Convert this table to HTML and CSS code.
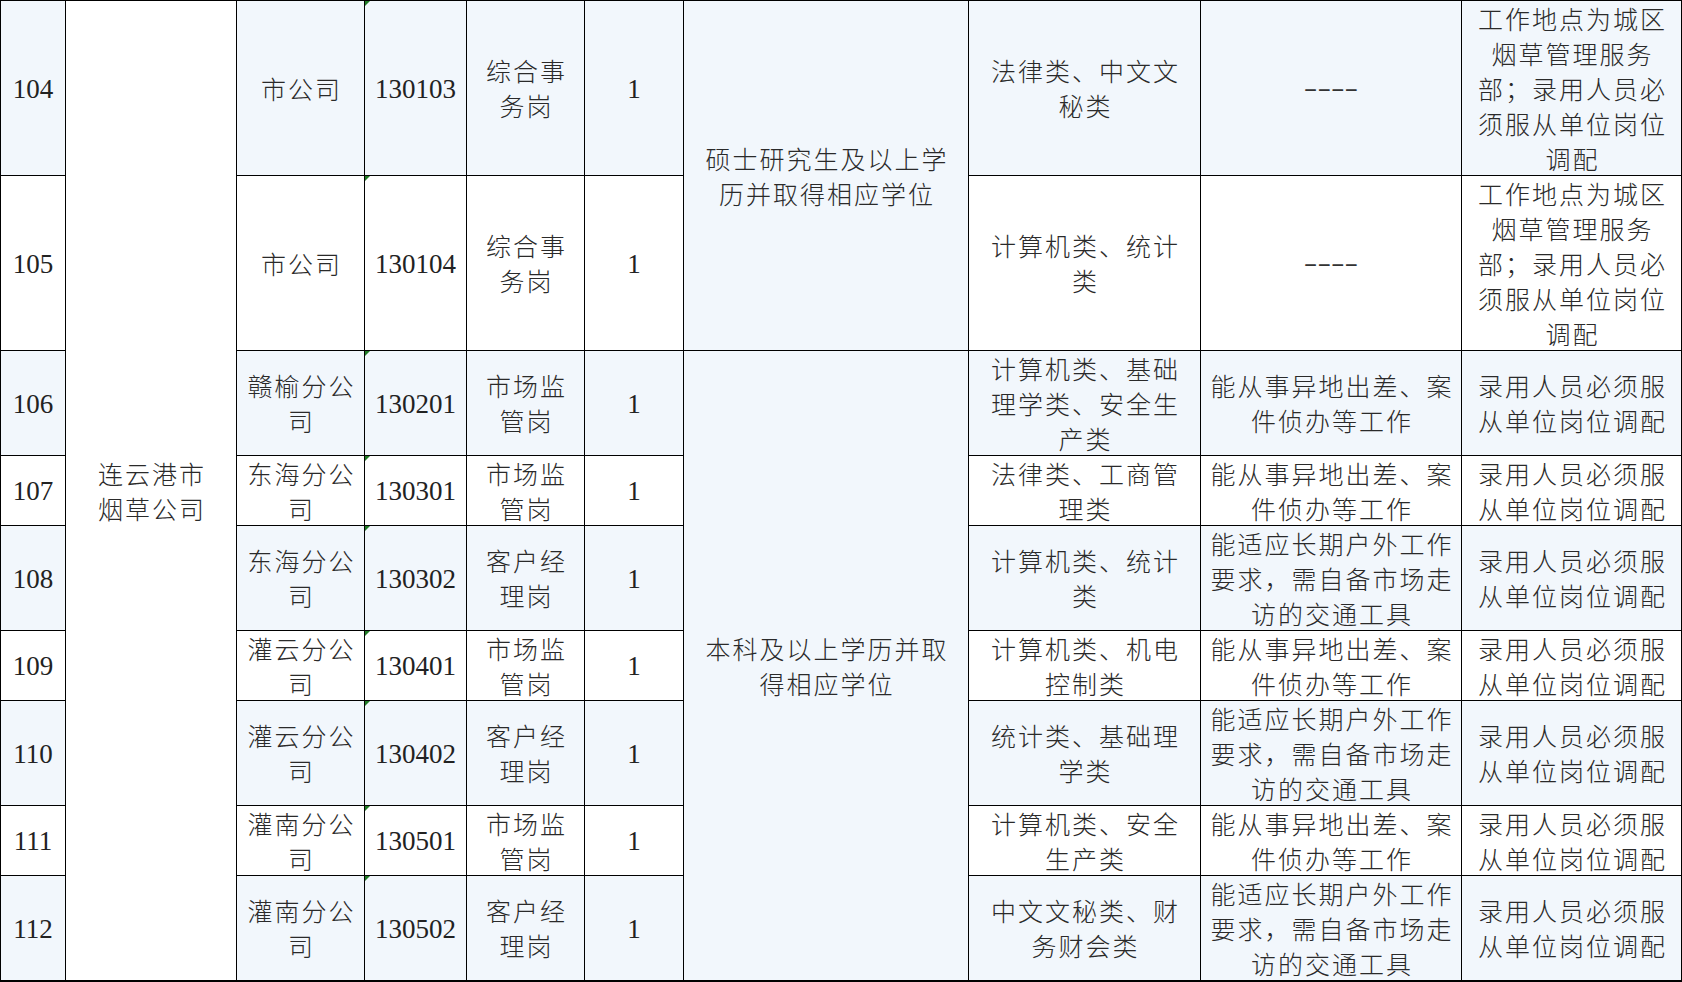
FILE: index.html
```html
<!DOCTYPE html>
<html lang="zh-CN">
<head>
<meta charset="utf-8">
<title>岗位表</title>
<link rel="stylesheet" href="styles.css">
</head>
<body>
<div class="sheet">
  <!-- 104 -->
  <div class="c num alt">104</div>
  <div class="c cn span9">连云港市<br>烟草公司</div>
  <div class="c cn alt">市公司</div>
  <div class="c num code alt">130103</div>
  <div class="c cn alt">综合事<br>务岗</div>
  <div class="c num alt">1</div>
  <div class="c cn span2 alt">硕士研究生及以上学<br>历并取得相应学位</div>
  <div class="c cn alt">法律类、中文文<br>秘类</div>
  <div class="c alt"><span class="dash">----</span></div>
  <div class="c cn alt">工作地点为城区<br>烟草管理服务<br>部；录用人员必<br>须服从单位岗位<br>调配</div>
  <!-- 105 -->
  <div class="c num">105</div>
  <div class="c cn">市公司</div>
  <div class="c num code">130104</div>
  <div class="c cn">综合事<br>务岗</div>
  <div class="c num">1</div>
  <div class="c cn">计算机类、统计<br>类</div>
  <div class="c"><span class="dash">----</span></div>
  <div class="c cn">工作地点为城区<br>烟草管理服务<br>部；录用人员必<br>须服从单位岗位<br>调配</div>
  <!-- 106 -->
  <div class="c num alt">106</div>
  <div class="c cn alt">赣榆分公<br>司</div>
  <div class="c num code alt">130201</div>
  <div class="c cn alt">市场监<br>管岗</div>
  <div class="c num alt">1</div>
  <div class="c cn span7 alt">本科及以上学历并取<br>得相应学位</div>
  <div class="c cn alt">计算机类、基础<br>理学类、安全生<br>产类</div>
  <div class="c cn alt">能从事异地出差、案<br>件侦办等工作</div>
  <div class="c cn alt">录用人员必须服<br>从单位岗位调配</div>
  <!-- 107 -->
  <div class="c num">107</div>
  <div class="c cn">东海分公<br>司</div>
  <div class="c num code">130301</div>
  <div class="c cn">市场监<br>管岗</div>
  <div class="c num">1</div>
  <div class="c cn">法律类、工商管<br>理类</div>
  <div class="c cn">能从事异地出差、案<br>件侦办等工作</div>
  <div class="c cn">录用人员必须服<br>从单位岗位调配</div>
  <!-- 108 -->
  <div class="c num alt">108</div>
  <div class="c cn alt">东海分公<br>司</div>
  <div class="c num code alt">130302</div>
  <div class="c cn alt">客户经<br>理岗</div>
  <div class="c num alt">1</div>
  <div class="c cn alt">计算机类、统计<br>类</div>
  <div class="c cn alt">能适应长期户外工作<br>要求，需自备市场走<br>访的交通工具</div>
  <div class="c cn alt">录用人员必须服<br>从单位岗位调配</div>
  <!-- 109 -->
  <div class="c num">109</div>
  <div class="c cn">灌云分公<br>司</div>
  <div class="c num code">130401</div>
  <div class="c cn">市场监<br>管岗</div>
  <div class="c num">1</div>
  <div class="c cn">计算机类、机电<br>控制类</div>
  <div class="c cn">能从事异地出差、案<br>件侦办等工作</div>
  <div class="c cn">录用人员必须服<br>从单位岗位调配</div>
  <!-- 110 -->
  <div class="c num alt">110</div>
  <div class="c cn alt">灌云分公<br>司</div>
  <div class="c num code alt">130402</div>
  <div class="c cn alt">客户经<br>理岗</div>
  <div class="c num alt">1</div>
  <div class="c cn alt">统计类、基础理<br>学类</div>
  <div class="c cn alt">能适应长期户外工作<br>要求，需自备市场走<br>访的交通工具</div>
  <div class="c cn alt">录用人员必须服<br>从单位岗位调配</div>
  <!-- 111 -->
  <div class="c num">111</div>
  <div class="c cn">灌南分公<br>司</div>
  <div class="c num code">130501</div>
  <div class="c cn">市场监<br>管岗</div>
  <div class="c num">1</div>
  <div class="c cn">计算机类、安全<br>生产类</div>
  <div class="c cn">能从事异地出差、案<br>件侦办等工作</div>
  <div class="c cn">录用人员必须服<br>从单位岗位调配</div>
  <!-- 112 -->
  <div class="c num alt">112</div>
  <div class="c cn alt">灌南分公<br>司</div>
  <div class="c num code alt">130502</div>
  <div class="c cn alt">客户经<br>理岗</div>
  <div class="c num alt">1</div>
  <div class="c cn alt">中文文秘类、财<br>务财会类</div>
  <div class="c cn alt">能适应长期户外工作<br>要求，需自备市场走<br>访的交通工具</div>
  <div class="c cn alt">录用人员必须服<br>从单位岗位调配</div>
</div>
</body>
</html>
```

FILE: styles.css
```css
html, body {
  margin: 0;
  padding: 0;
  background: #ffffff;
}

.sheet {
  width: 1682px;
  box-sizing: border-box;
  display: grid;
  grid-template-columns: 65px 171px 128px 102px 118px 99px 285px 232px 261px 220px;
  grid-template-rows: 175px 175px 105px 70px 105px 70px 105px 70px 105px;
  border-left: 1px solid #000;
  border-top: 1px solid #000;
  border-bottom: 1px solid #000;
  font-family: "Liberation Serif", "Noto Sans CJK SC", serif;
  color: #222;
}

.c {
  box-sizing: border-box;
  border-right: 1px solid #000;
  border-bottom: 1px solid #000;
  background: #ffffff;
  display: flex;
  align-items: center;
  justify-content: center;
  text-align: center;
  white-space: nowrap;
  overflow: hidden;
}

.c.alt {
  background: #f2f7fc;
}

.span9 { grid-row: span 9; }
.span7 { grid-row: span 7; }
.span2 { grid-row: span 2; }

.num {
  font-family: "Liberation Serif", serif;
  font-size: 27px;
  letter-spacing: 0;
  padding-top: 2px;
}

.cn {
  font-family: "Noto Sans CJK SC", "Noto Sans CJK JP", sans-serif;
  font-weight: 300;
  font-size: 25px;
  line-height: 35px;
  letter-spacing: 2px;
  padding-left: 2px;
  color: #2a2a2a;
}

.code {
  position: relative;
}

.code::before {
  content: "";
  position: absolute;
  top: 0;
  left: 0;
  width: 0;
  height: 0;
  border-top: 5px solid #1f7a24;
  border-right: 5px solid transparent;
}

.dash {
  display: inline-block;
  font-family: "Liberation Serif", serif;
  font-size: 24px;
  color: #333;
  transform: scaleX(1.7);
}
```
